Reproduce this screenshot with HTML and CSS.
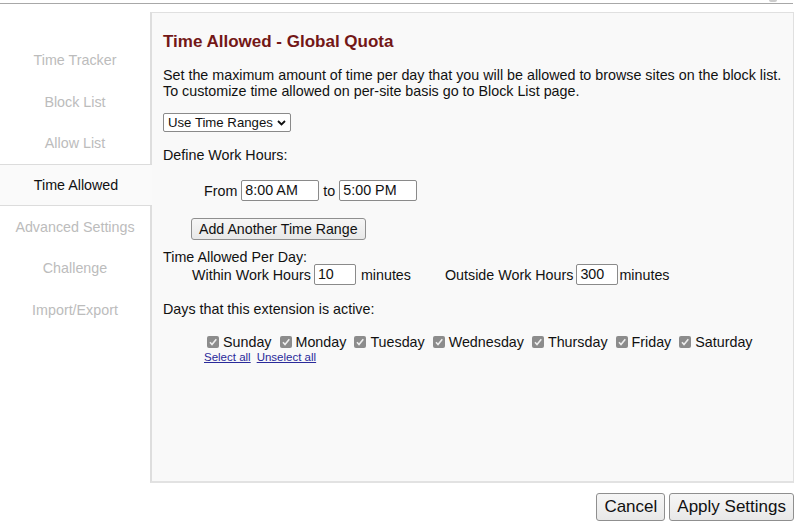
FILE: index.html
```html
<!DOCTYPE html>
<html>
<head>
<meta charset="utf-8">
<link rel="stylesheet" href="styles.css">
</head>
<body>
<div class="topbar"><span class="corner"></span></div>
<div class="layout">
  <nav class="nav">
    <div class="nav-item">Time Tracker</div>
    <div class="nav-item">Block List</div>
    <div class="nav-item">Allow List</div>
    <div class="nav-item active">Time Allowed</div>
    <div class="nav-item">Advanced Settings</div>
    <div class="nav-item">Challenge</div>
    <div class="nav-item">Import/Export</div>
  </nav>
  <main class="panel">
    <h1 class="title">Time Allowed - Global Quota</h1>
    <p class="intro">Set the maximum amount of time per day that you will be allowed to browse sites on the block list.<br>To customize time allowed on per-site basis go to Block List page.</p>
    <div class="select">Use Time Ranges <svg width="9" height="6" viewBox="0 0 9 6"><path d="M1 1l3.5 3.5L8 1" fill="none" stroke="#111" stroke-width="1.8"/></svg></div>
    <div class="label define">Define Work Hours:</div>
    <div class="range">
      <span>From</span><span class="input wide">8:00 AM</span><span>to</span><span class="input wide">5:00 PM</span>
    </div>
    <div class="add-row"><span class="btn small">Add Another Time Range</span></div>
    <div class="label per-day">Time Allowed Per Day:</div>
    <div class="quota">
      <span>Within Work Hours</span><span class="input num">10</span><span class="unit">minutes</span>
      <span class="outside">Outside Work Hours</span><span class="input num">300</span><span class="unit tight">minutes</span>
    </div>
    <div class="label days-label">Days that this extension is active:</div>
    <div class="days">
      <span class="day"><span class="cb"></span>Sunday</span>
      <span class="day"><span class="cb"></span>Monday</span>
      <span class="day"><span class="cb"></span>Tuesday</span>
      <span class="day"><span class="cb"></span>Wednesday</span>
      <span class="day"><span class="cb"></span>Thursday</span>
      <span class="day"><span class="cb"></span>Friday</span>
      <span class="day"><span class="cb"></span>Saturday</span>
    </div>
    <div class="links"><a href="#">Select all</a><a href="#">Unselect all</a></div>
  </main>
</div>
<div class="footer">
  <span class="btn big">Cancel</span><span class="btn big">Apply Settings</span>
</div>
</body>
</html>
```

FILE: styles.css
```css
html, body {
  margin: 0;
  background: #fff;
  font-family: "Liberation Sans", Arial, sans-serif;
  color: #111;
}
.topbar {
  width: 793px;
  height: 3px;
  border-bottom: 1px solid #a8a8a8;
  position: relative;
}
.corner {
  position: absolute;
  right: 16px;
  top: 0;
  width: 8px;
  height: 2px;
  background: #ccc;
  border-radius: 0 0 4px 4px;
}
.layout {
  display: flex;
  margin-top: 8px;
}
.nav {
  width: 150px;
  flex: none;
  padding-top: 27px;
  display: flex;
  flex-direction: column;
}
.nav-item {
  height: 41.7px;
  display: flex;
  align-items: center;
  justify-content: center;
  font-size: 14.3px;
  color: #bcbcbc;
  box-sizing: border-box;
}
.nav-item.active {
  color: #111;
  background: #fafafa;
  border-top: 1px solid #dcdcdc;
  border-bottom: 1px solid #dcdcdc;
  margin-right: -2px;
  position: relative;
  z-index: 1;
}
.panel {
  width: 644px;
  height: 471px;
  box-sizing: border-box;
  background: #f9f9f9;
  border: 1px solid #e0e0e0;
  border-left: 2px solid #dedede;
  border-bottom: 2px solid #e2e2e2;
  padding: 19px 0 0 11px;
  font-size: 14.3px;
}
.title {
  margin: 0;
  font-size: 17px;
  font-weight: bold;
  color: #731717;
  line-height: 20px;
}
.intro {
  margin: 15px 0 0;
  line-height: 16px;
}
.select {
  margin-top: 14px;
  display: inline-flex;
  align-items: center;
  gap: 4px;
  height: 17px;
  padding: 0 4px 0 4px;
  border: 1px solid #8a8a8a;
  border-radius: 2px;
  background: #fff;
  font-size: 13.2px;
  line-height: 17px;
}
.label {
  line-height: 16px;
}
.define { margin-top: 15px; }
.range {
  margin-top: 17px;
  padding-left: 41px;
  display: flex;
  align-items: center;
  gap: 4px;
}
.input {
  display: inline-block;
  box-sizing: border-box;
  height: 21px;
  line-height: 19px;
  padding: 0 3px;
  border: 1px solid #8a8a8a;
  border-radius: 2px;
  background: #fff;
}
.input.wide { width: 78px; }
.input.num { width: 42px; }
.add-row {
  margin-top: 17px;
  padding-left: 28px;
}
.btn {
  display: inline-flex;
  align-items: center;
  box-sizing: border-box;
  border: 1px solid #8f8f8f;
  border-radius: 3px;
  background: linear-gradient(#f6f6f6, #e8e8e8);
  color: #111;
}
.btn.small {
  height: 22px;
  padding: 0 7px;
  font-size: 14.2px;
}
.per-day { margin-top: 9px; }
.quota {
  margin-top: -1px;
  padding-left: 29px;
  display: flex;
  align-items: center;
  gap: 3px;
}
.quota .unit { margin-left: 2px; }
.quota .unit.tight { margin-left: -2px; }
.outside { margin-left: 31px; }
.days-label { margin-top: 16px; }
.days {
  margin-top: 17px;
  padding-left: 44px;
  display: flex;
  align-items: center;
  gap: 8px;
}
.day {
  display: inline-flex;
  align-items: center;
  gap: 4px;
}
.cb {
  width: 12px;
  height: 12px;
  border-radius: 2px;
  background: #8c8c8c url("data:image/svg+xml,%3Csvg xmlns='http://www.w3.org/2000/svg' width='12' height='12'%3E%3Cpath d='M3 6.3l2 2.2L9.3 3.2' fill='none' stroke='%23eee' stroke-width='1.6'/%3E%3C/svg%3E") no-repeat center;
}
.links {
  margin-top: 1px;
  padding-left: 41px;
  font-size: 11.5px;
  display: flex;
  gap: 6px;
}
.links a {
  color: #2a2a9a;
}
.footer {
  width: 794px;
  margin-top: 10px;
  display: flex;
  justify-content: flex-end;
  gap: 4px;
}
.btn.big {
  height: 28px;
  padding: 0 7px;
  font-size: 17px;
}
```
